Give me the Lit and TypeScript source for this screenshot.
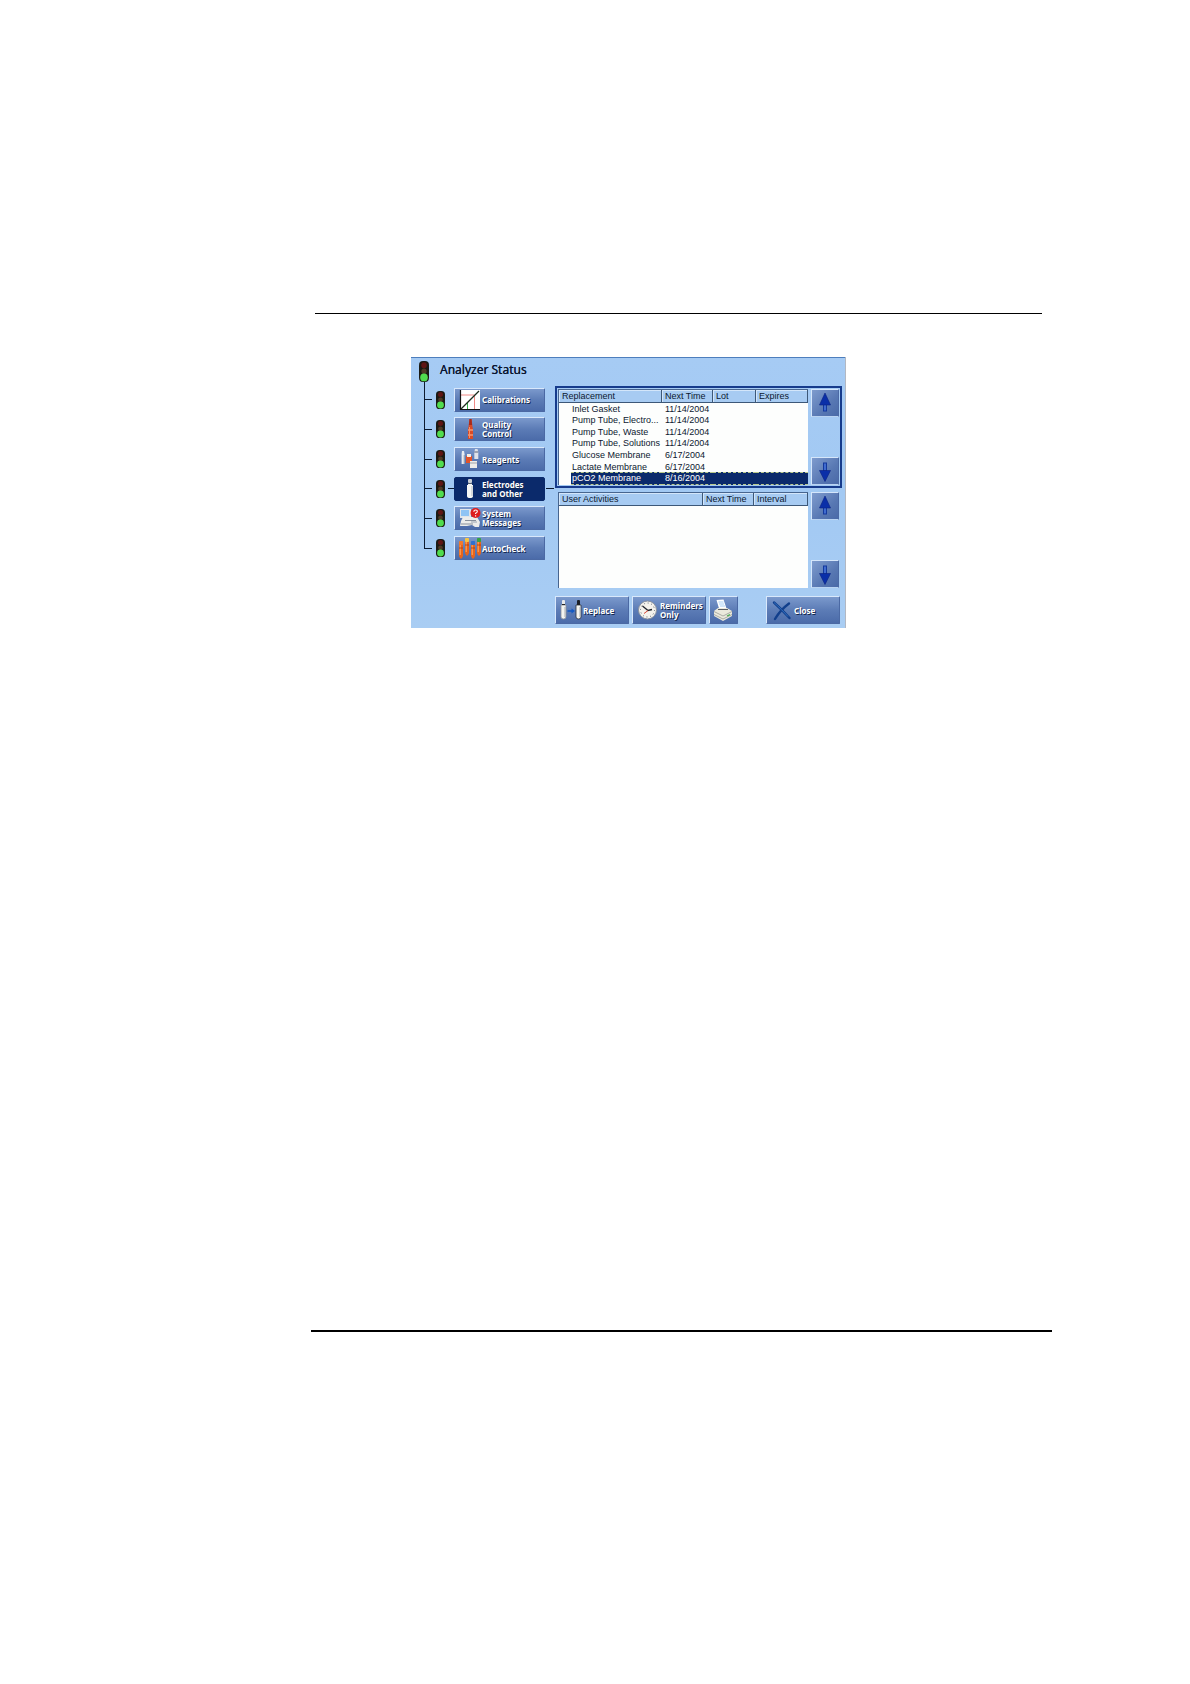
import { LitElement, html, svg, css, TemplateResult } from "lit";
import { customElement, property, state } from "lit/decorators.js";
import { classMap } from "lit/directives/class-map.js";

type Art = ReturnType<typeof svg>;

const electrode = (x: number, tip: string, edge: string) => svg`
  <rect x=${x + 1} y="1" width="3" height="5" rx="1" fill=${tip}/>
  <path d="M${x} 6h5v12q0 2-2.500 2t-2.500-2z" fill="#f4f4f0" stroke=${edge} stroke-width=".8"/>
  <path d="M${x + 1} 5.500h3" stroke="#222" stroke-width="1"/>
  <path d="M${x + 4} 8v10" stroke="#a9adb3" stroke-width="1"/>`;

const tube = (x: number, y: number, cap: string) => svg`
  <path d="M${x} ${y + 3}h4v12l-1.200 2.500h-1.600l-1.200-2.500z" fill="#e8641c"/>
  <path d="M${x + 1.2} ${y + 4}v10" stroke="#ffab62" stroke-width="1"/>
  <path d="M${x} ${y + 7}h4" stroke="#a63a10" stroke-width=".8"/>
  <rect x=${x} y=${y} width="4" height="4" rx=".8" fill=${cap}/>`;

const ART: Record<string, Art> = {
  calibrations: svg`
    <rect x="1" y="1" width="20" height="20" fill="#fff"/>
    <path d="M1 6h14.500v14" fill="none" stroke="#f08a86" stroke-width="1"/>
    <path d="M8.500 20v-6" stroke="#35b24a" stroke-width="1"/>
    <path d="M2 20L20 2" stroke="#1c2c1e" stroke-width="1.300"/>
    <path d="M1.500 1v19.500H21" fill="none" stroke="#111" stroke-width="1.200"/>`,
  quality: svg`
    <path d="M10.500 1h2l1 8 .5 2v10H9V11l.5-2z" fill="#d94a26"/>
    <path d="M10.500 1h2l.6 6h-3.200z" fill="#a82a1a"/>
    <path d="M9 12h5M9 17h5" stroke="#ffc09a" stroke-width="1"/>
    <path d="M10.500 9v11" stroke="#f59068" stroke-width="1"/>`,
  reagents: svg`
    <path d="M3 3h2l.6 3v10H2.600V6z" fill="#e9edf2"/>
    <path d="M5.200 7v9" stroke="#8791a3" stroke-width=".8"/>
    <rect x="7" y="8" width="6" height="7" fill="#e2532a"/>
    <rect x="8" y="6" width="4" height="3" fill="#f5efe8"/>
    <rect x="11" y="13" width="7" height="7" fill="#ececea"/>
    <path d="M11 15h7" stroke="#a0a4aa"/>
    <path d="M16 1h2.500l.8 3v7h-4V4z" fill="#dfe3ea"/>
    <path d="M15.300 4h4" stroke="#59657d"/>`,
  electrodes: svg`
    <rect x="9" y="1" width="4" height="4" rx="1" fill="#c9ced6"/>
    <path d="M9 5h4v2h1v11q0 2-3 2t-3-2V7h1z" fill="#f6f7f5"/>
    <path d="M9 5.500h4" stroke="#55606f"/>
    <path d="M13 8v10" stroke="#b4b9c0"/>`,
  system: svg`
    <rect x="1" y="2" width="11" height="9" fill="#dfe5ea"/>
    <rect x="2" y="3" width="8" height="6" fill="#8fc4f4"/>
    <path d="M4 10h14l3 5-1 5h-4l-3-2-5 1H1l1-5z" fill="#ececea"/>
    <path d="M6 13.500h11M2 17h12" stroke="#878f9b"/>
    <path d="M12 14h6v2h-6z" fill="#c2c7cd"/>
    <circle cx="16.500" cy="6" r="5" fill="#dd1c1c"/>
    <path d="M14.800 4.800q0-1.800 1.800-1.800t1.700 1.500q0 1-1.700 1.800v.8M16.600 8.200v1.200" fill="none" stroke="#fff" stroke-width="1.100"/>`,
  autocheck: svg`
    ${tube(0, 4, "#f2792c")}${tube(6, 1, "#f6c443")}${tube(12, 4, "#2f6fd0")}${tube(18, 1, "#35a244")}`,
  replace: svg`
    ${electrode(1, "#e8eaec", "#8b919b")}${electrode(16, "#1b1f27", "#2a303c")}
    <path d="M7.500 12h4.500" stroke="#1259c4" stroke-width="1.600"/>
    <path d="M11.500 9.500l3.500 2.500-3.500 2.500z" fill="#1259c4"/>`,
  reminders: svg`
    <circle cx="10.500" cy="11" r="9" fill="#f4f2ec" stroke="#8b929e" stroke-width="1"/>
    <circle cx="10.500" cy="11" r="7" fill="none" stroke="#5f6772" stroke-width="1" stroke-dasharray="1 2.660"/>
    <path d="M5.500 7l5.500 4.500 4-1" fill="none" stroke="#20242c" stroke-width="1.300"/>
    <path d="M11 11.500l-4 3" stroke="#d84634" stroke-width="1"/>`,
  print: svg`
    <path d="M4.500 1l7-.5 3 9H7z" fill="#fff"/>
    <path d="M6.500 3h5M7 5h5M8 7h5" stroke="#a7d0f5"/>
    <path d="M2 12l4-3h9l5 3v5l-9 5-9-5z" fill="#ebe9dc"/>
    <path d="M2 12.500l9 4.500 9-4.500M2 15.500l9 4.500 9-4.500" fill="none" stroke="#989b94" stroke-width=".8"/>
    <path d="M6 10.500h10" stroke="#5a5f66"/>
    <path d="M15 17l3-1.400" stroke="#4cae50" stroke-width="1.200"/>`,
  close: svg`
    <path d="M3 3.500C8 8 13 13 18.500 19M18 4.500C12 9 7.500 14 4 20" fill="none" stroke="#123f8c" stroke-width="2.400" stroke-linecap="round"/>
    <path d="M3 3.500C8 8 13 13 17 17.500" fill="none" stroke="#2f6fc0" stroke-width="1"/>`,
};

const icon = (name: string): TemplateResult =>
  html`<svg class="icon" viewBox="0 0 22 22" aria-hidden="true">${ART[name]}</svg>`;

const light = (cls: string): TemplateResult => html`
  <svg class=${cls} viewBox="0 0 10 20" preserveAspectRatio="none" aria-hidden="true">
    <rect x="0" y="0" width="10" height="20" rx="4" fill="#1a1a14"/>
    <circle cx="5" cy="4" r="2.800" fill="#5f1614"/>
    <circle cx="5" cy="9.800" r="2.600" fill="#4f3a26"/>
    <circle cx="5" cy="15.600" r="3.800" fill="#50dc4e"/>
  </svg>`;

interface Column { label: string; width: number; span?: number; }

@customElement("status-list")
class StatusList extends LitElement {
  @property() label = "";
  @property({ attribute: false }) columns: Column[] = [];
  @property({ attribute: false }) rows: string[][] = [];
  @state() private selected = 6;

  static styles = css`
    :host { display: grid; grid-template-columns: minmax(0, 1fr) 28px; gap: 3px; }
    .list {
      background: #fdfefd; border: solid #47658f; border-width: 1px 0 0 1px; overflow: hidden;
    }
    table { width: 100%; table-layout: fixed; border-collapse: separate; border-spacing: 0; }
    .filled { height: 100%; }
    .head { height: 13px; }
    th {
      height: 13px; box-sizing: border-box; padding: 0 0 0 3px; background: #a7cbf2;
      border: solid #3d5878; border-width: 0 1px 1px 0;
      box-shadow: inset 1px 1px #d3e6fa; text-align: left; font-weight: 400; line-height: 11px;
    }
    td { padding: 0 0 0 1px; line-height: 10px; overflow: hidden; white-space: nowrap; }
    .date { padding-left: 3px; overflow: visible; }
    .picked {
      background: #0b2a6b; color: #fff; border: dashed #b9c98c; border-width: 1px 0; line-height: 9px;
    }
    .scroll { display: flex; flex-direction: column; justify-content: space-between; }
    .arrow {
      width: 28px; height: 28px; padding: 0; border: solid; border-width: 1px;
      border-color: #d5e6fa #4c6aa5 #b9d3f1 #d5e6fa;
      background: linear-gradient(135deg, #7f9cce, #5878b3 60%, #4a6aa8);
    }
    .arrow svg { display: block; width: 26px; height: 26px; }
  `;

  render() {
    return html`
      <div class="list">
        <table class=${classMap({ filled: this.rows.length > 0 })} aria-label=${this.label}>
          <colgroup>${this.columns.flatMap((c) => c.span
            ? [html`<col style="width:12px">`, html`<col style="width:${c.width - 12}px">`]
            : [html`<col style="width:${c.width}px">`])}</colgroup>
          <thead><tr class="head">
            ${this.columns.map((c) => html`<th scope="col" colspan=${c.span ?? 1}>${c.label}</th>`)}
          </tr></thead>
          <tbody>
            ${this.rows.map((r, i) => {
              const picked = i === this.selected;
              return html`<tr @click=${() => (this.selected = i)}>
                <td></td>
                <td class=${classMap({ picked })}>${r[0]}</td>
                <td class=${classMap({ date: true, picked })}>${r[1]}</td>
                <td class=${classMap({ picked })}></td>
                <td class=${classMap({ picked })}></td>
              </tr>`;
            })}
          </tbody>
        </table>
      </div>
      <div class="scroll">
        <button class="arrow" aria-label="Scroll up">
          <svg viewBox="0 0 26 26"><rect x="11.500" y="13" width="3" height="8" fill="#3f6bd0" stroke="#14399c"/>
            <path d="M13 3l5.500 12h-11z" fill="#0a2fa8" stroke="#0a2282" stroke-width=".6"/></svg>
        </button>
        <button class="arrow" aria-label="Scroll down">
          <svg viewBox="0 0 26 26"><rect x="11.500" y="5" width="3" height="8" fill="#3f6bd0" stroke="#14399c"/>
            <path d="M13 23.500l-5.500-11h11z" fill="#0a2fa8" stroke="#0a2282" stroke-width=".6"/></svg>
        </button>
      </div>`;
  }
}

const SECTIONS: { id: string; lines: string[] }[] = [
  { id: "calibrations", lines: ["Calibrations"] },
  { id: "quality", lines: ["Quality", "Control"] },
  { id: "reagents", lines: ["Reagents"] },
  { id: "electrodes", lines: ["Electrodes", "and Other"] },
  { id: "system", lines: ["System", "Messages"] },
  { id: "autocheck", lines: ["AutoCheck"] },
];

const REPLACEMENT_COLUMNS: Column[] = [
  { label: "Replacement", width: 103, span: 2 },
  { label: "Next Time", width: 51 },
  { label: "Lot", width: 43 },
  { label: "Expires", width: 52 },
];

const REPLACEMENTS = [
  ["Inlet Gasket", "11/14/2004"],
  ["Pump Tube, Electro...", "11/14/2004"],
  ["Pump Tube, Waste", "11/14/2004"],
  ["Pump Tube, Solutions", "11/14/2004"],
  ["Glucose Membrane", "6/17/2004"],
  ["Lactate Membrane", "6/17/2004"],
  ["pCO2 Membrane", "8/16/2004"],
];

const ACTIVITY_COLUMNS: Column[] = [
  { label: "User Activities", width: 144 },
  { label: "Next Time", width: 51 },
  { label: "Interval", width: 54 },
];

@customElement("app-root")
class AppRoot extends LitElement {
  @state() private active = "electrodes";

  static styles = css`
    :host {
      display: flex; flex-direction: column; box-sizing: border-box; min-height: 100vh;
      padding: 313px 138px 352px 311px; background: #fff; color: #0c1830;
      font-family: "Liberation Sans", Arial, sans-serif; font-size: 9px;
    }
    .rule { border: 0; margin: 0; background: #000; }
    .top { height: 1px; margin: 0 10px 0 4px; }
    .bottom { height: 2px; }
    main { flex: 1; padding: 43px 0 43px 100px; }
    .screen {
      box-sizing: border-box; max-width: 435px; padding: 0 3px 4px 0;
      background: linear-gradient(#a6cbf4, #a2c9f3 50%, #a9cdf3);
      border: solid #b3b8c2; border-width: 0 1px 0 0; box-shadow: inset 0 1px #4d7ebd;
    }
    header { display: flex; gap: 11px; padding: 4px 0 0 8px; }
    .main-light { width: 10px; height: 21px; }
    h1 {
      margin: 0; font: 400 12px/18px "Noto Sans", "Open Sans", sans-serif; color: #0a1530;
      text-shadow: 0 0 #0a1530;
    }
    .body { display: grid; grid-template-columns: 131px minmax(0, 1fr); padding-left: 13px; }
    nav::before { content: ""; display: block; height: 3px; border-left: 1px solid #0c1a30; }
    ul {
      display: grid; grid-auto-rows: 1fr; height: 178px; list-style: none; margin: 0; padding: 0;
    }
    li { display: flex; align-items: center; }
    .branch { display: flex; flex-direction: column; align-self: stretch; width: 8px; margin-right: 4px; }
    .branch::before, .branch::after { content: ""; flex: 1; border-left: 1px solid #0c1a30; }
    .branch::before { border-bottom: 1px solid #0c1a30; }
    li:last-child .branch::after { border-color: transparent; }
    .small-light { width: 9px; height: 18px; }
    .link { width: 6px; height: 1px; margin-left: 3px; }
    .out { width: 8px; height: 1px; margin-left: 1px; }
    .on { background: #0c1a30; }
    .btn {
      display: flex; align-items: center; gap: 1px; box-sizing: border-box; padding: 0 0 0 4px;
      border: 1px solid; border-color: #d9e8fb #4b69a4 #4b69a4 #d9e8fb; border-radius: 1px;
      background: linear-gradient(#7b99cc, #5c7cb6 50%, #4b6ba9); color: #fff; text-align: left;
      font: 700 8px/9px "Noto Sans", "Open Sans", sans-serif; text-shadow: 1px 1px #16294f;
      white-space: nowrap;
    }
    .btn span { display: block; }
    .icon { flex: none; width: 22px; height: 22px; }
    .nav { width: 91px; height: 24px; }
    .current { background: #0b2a6b; border-color: #0b2a6b; border-radius: 2px; }
    .content { display: flex; flex-direction: column; gap: 1px; padding-top: 4px; }
    .group { padding: 1px; border: 2px solid transparent; }
    .framed { border-color: #163b8c; }
    .tall { height: 96px; }
    footer { display: flex; gap: 3px; padding-top: 4px; }
    .tool { width: 74px; height: 28px; }
    .square { width: 29px; padding-left: 2px; }
    .last { margin: 0 2px 0 auto; }
  `;

  render() {
    return html`
      <hr class="rule top">
      <main>
        <section class="screen">
          <header>${light("main-light")}<h1>Analyzer Status</h1></header>
          <div class="body">
            <nav><ul>
              ${SECTIONS.map((s) => {
                const on = s.id === this.active;
                return html`<li>
                  <div class="branch"></div>
                  ${light("small-light")}
                  <div class=${classMap({ link: true, on })}></div>
                  <button class=${classMap({ btn: true, nav: true, current: on })}
                    @click=${() => (this.active = s.id)}>
                    ${icon(s.id)}<span>${s.lines.map((l) => html`<span>${l}</span>`)}</span>
                  </button>
                  <div class=${classMap({ out: true, on })}></div>
                </li>`;
              })}
            </ul></nav>
            <div class="content">
              <div class="group framed">
                <status-list class="tall" label="Replacement"
                  .columns=${REPLACEMENT_COLUMNS} .rows=${REPLACEMENTS}></status-list>
              </div>
              <div class="group">
                <status-list class="tall" label="User Activities" .columns=${ACTIVITY_COLUMNS}></status-list>
              </div>
              <footer>
                <button class="btn tool">${icon("replace")}<span>Replace</span></button>
                <button class="btn tool">${icon("reminders")}<span><span>Reminders</span><span>Only</span></span></button>
                <button class="btn tool square" aria-label="Print">${icon("print")}</button>
                <button class="btn tool last">${icon("close")}<span>Close</span></button>
              </footer>
            </div>
          </div>
        </section>
      </main>
      <hr class="rule bottom">`;
  }
}
